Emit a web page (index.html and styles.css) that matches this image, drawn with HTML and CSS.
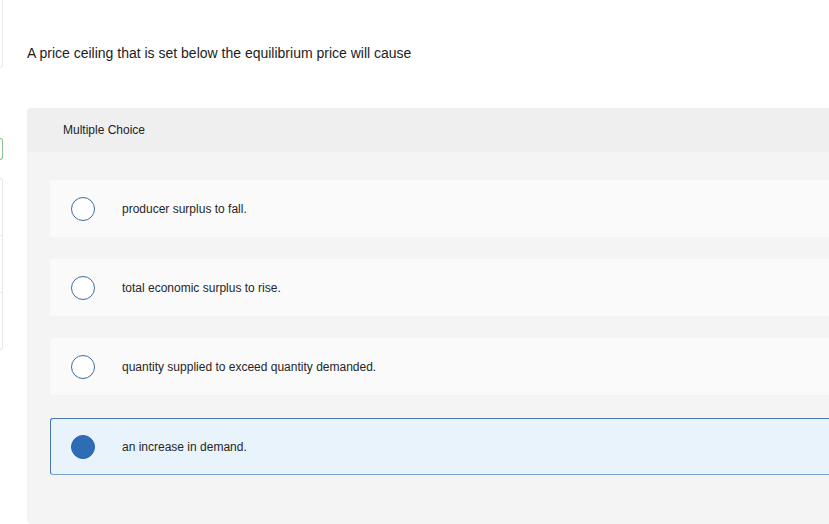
FILE: index.html
```html
<!DOCTYPE html>
<html>
<head>
<meta charset="utf-8">
<link rel="stylesheet" href="styles.css">
</head>
<body>
<div class="page">
  <aside class="rail">
    <div class="rail-top"></div>
    <div class="rail-badge"></div>
    <div class="rail-list">
      <div class="rail-item"></div>
      <div class="rail-item"></div>
      <div class="rail-item"></div>
    </div>
  </aside>
  <main class="main">
    <p class="question">A price ceiling that is set below the equilibrium price will cause</p>
    <section class="mc">
      <header class="mc-head">Multiple Choice</header>
      <div class="mc-body">
        <div class="option"><span class="radio"></span><span class="label">producer surplus to fall.</span></div>
        <div class="option"><span class="radio"></span><span class="label">total economic surplus to rise.</span></div>
        <div class="option"><span class="radio"></span><span class="label">quantity supplied to exceed quantity demanded.</span></div>
        <div class="option selected"><span class="radio"></span><span class="label">an increase in demand.</span></div>
      </div>
    </section>
  </main>
</div>
</body>
</html>
```

FILE: styles.css
```css
html, body {
  margin: 0;
  padding: 0;
  background: #ffffff;
  overflow: hidden;
  width: 829px;
  height: 524px;
}
body {
  font-family: "Liberation Sans", Arial, sans-serif;
  color: #222222;
}
.page {
  display: flex;
  gap: 24px;
  width: 829px;
}
.rail {
  width: 3px;
  flex: none;
  display: flex;
  flex-direction: column;
}
.rail-top {
  height: 68px;
  width: 3px;
  border: 1px solid #ececec;
  border-left: none;
  border-top: none;
  border-radius: 0 0 4px 0;
  box-sizing: border-box;
}
.rail-badge {
  margin-top: 70px;
  height: 22px;
  width: 3px;
  box-sizing: border-box;
  border: 1.5px solid #8bc48a;
  border-left: none;
  border-radius: 0 11px 11px 0 / 0 11px 11px 0;
}
.rail-list {
  margin-top: 18px;
  width: 3px;
  box-sizing: border-box;
  border: 1px solid #e6e6e6;
  border-left: none;
  border-radius: 0 3px 3px 0;
  display: flex;
  flex-direction: column;
}
.rail-item {
  height: 56px;
  border-bottom: 1px solid #ececec;
}
.rail-item:last-child {
  border-bottom: none;
}
.main {
  flex: 1;
  min-width: 0;
}
.question {
  margin: 45px 0 0 0;
  font-size: 14px;
  line-height: 16px;
  color: #1d1d1d;
}
.mc {
  margin-top: 47px;
  background: #f4f4f4;
  border-radius: 4px 0 0 4px;
  height: 416px;
}
.mc-head {
  height: 44px;
  background: #efefef;
  border-radius: 4px 0 0 0;
  padding-left: 36px;
  display: flex;
  align-items: center;
  font-size: 12px;
  color: #222222;
}
.mc-body {
  padding: 28px 0 0 23px;
  display: flex;
  flex-direction: column;
  gap: 22px;
}
.option {
  height: 57px;
  box-sizing: border-box;
  background: #fafafa;
  border-radius: 3px 0 0 3px;
  display: flex;
  align-items: center;
  padding-left: 21px;
  font-size: 12px;
  color: #262626;
}
.radio {
  width: 24px;
  height: 24px;
  box-sizing: border-box;
  border: 1.5px solid #3f6b9c;
  border-radius: 50%;
  background: #ffffff;
  flex: none;
}
.label {
  margin-left: 27px;
}
.option.selected {
  margin-top: 1px;
  background: #e8f3fc;
  border: 1px solid #4a78ae;
  border-right: none;
  border-bottom-color: #7aa0cf;
  padding-left: 20px;
}
.option.selected .radio {
  background: #2e6cb6;
  border-color: #2a65ab;
}
```
